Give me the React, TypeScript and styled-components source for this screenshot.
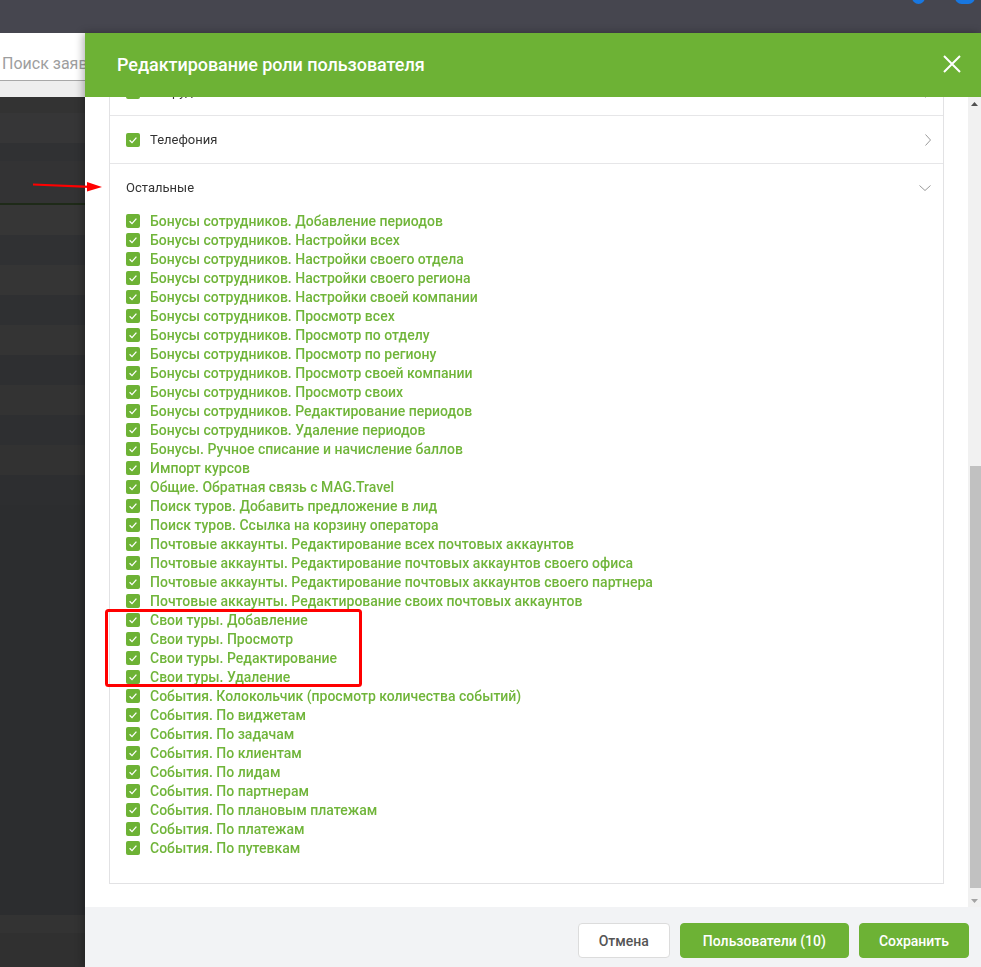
import React, { useLayoutEffect, useRef } from 'react'
import styled, { createGlobalStyle } from 'styled-components'

const GREEN = '#6db235'

const GlobalStyle = createGlobalStyle`
    html, body {
        margin: 0;
        padding: 0;
        height: 100%;
        overflow: hidden;
        background: #2c2d2f;
        font-family: Roboto, "Noto Sans", Arial, sans-serif;
    }
    #root {
        height: 100%;
    }
`

const Page = styled.div`
    height: 100vh;
    display: flex;
    flex-direction: column;
    position: relative;
`

const TopBar = styled.div`
    height: 33px;
    flex: none;
    background: #46464f;
    display: flex;
    justify-content: flex-end;
    align-items: flex-start;
    gap: 30px;
    padding-right: 6px;
`

const Badge = styled.span<{ $w: number }>`
    width: ${(p) => p.$w}px;
    height: 13px;
    margin-top: -9px;
    border-radius: 7px;
    background: #1877e0;
`

const Behind = styled.div`
    flex: 1;
    display: flex;
    flex-direction: column;
`

const SearchStrip = styled.div`
    height: 64px;
    flex: none;
    background: #fff;
    display: flex;
    flex-direction: column;
`

const SearchInput = styled.div`
    height: 48px;
    border-bottom: 1px solid #a8a8a8;
    display: flex;
    align-items: flex-end;
    padding: 0 0 7px 2px;
    box-sizing: border-box;
    font-size: 16px;
    line-height: 19px;
    color: #9e9e9e;
    white-space: nowrap;
    overflow: hidden;
`

const SearchUnder = styled.div`
    flex: 1;
    background: #eeeeee;
`

const Band = styled.div<{ $h: number; $c: string }>`
    height: ${(p) => p.$h}px;
    flex: none;
    background: ${(p) => p.$c};
`

const Drawer = styled.div`
    position: fixed;
    top: 33px;
    left: 85px;
    right: 0;
    bottom: 0;
    background: #fff;
    display: flex;
    flex-direction: column;
    box-shadow: -2px 0 8px rgba(0, 0, 0, 0.3);
`

const Header = styled.div`
    height: 64px;
    flex: none;
    background: ${GREEN};
    display: flex;
    align-items: center;
    justify-content: space-between;
    padding: 0 20px 2px 32px;
    box-sizing: border-box;
`

const Title = styled.h1`
    margin: 0;
    font-size: 18px;
    font-weight: 500;
    color: #fff;
    letter-spacing: -0.05px;
`

const BodyWrap = styled.div`
    flex: 1;
    min-height: 0;
    display: flex;
`

const Scroll = styled.div`
    flex: 1;
    overflow-y: auto;
    scrollbar-width: none;
    position: relative;
    padding: 24px 24px;
    &::-webkit-scrollbar {
        display: none;
    }
`

const ScrollTrack = styled.div`
    width: 13px;
    flex: none;
    background: #f1f1f1;
    display: flex;
    flex-direction: column;
    align-items: center;
`

const ScrollArrow = styled.div`
    height: 13px;
    flex: none;
    display: flex;
    align-items: center;
    justify-content: center;
`

const ScrollSpace = styled.div`
    flex: 1;
`

const Thumb = styled.div`
    width: 11px;
    margin-left: 2px;
    height: 422px;
    margin-bottom: 6px;
    background: #c1c1c1;
    flex: none;
`

const Panel = styled.div`
    border: 1px solid #e2e2e4;
`

const CategoryRow = styled.div<{ $open?: boolean }>`
    height: ${(p) => (p.$open ? '47px' : '48px')};
    box-sizing: border-box;
    display: flex;
    align-items: center;
    gap: 10px;
    padding: 0 11px 0 16px;
    border-bottom: ${(p) => (p.$open ? 'none' : '1px solid #e6e6e8')};
    font-size: 13px;
    color: #333;
`

const CategoryName = styled.span`
    flex: 1;
`

const ItemList = styled.div`
    padding: 0 16px 26px;
    display: flex;
    flex-direction: column;
`

const Item = styled.div`
    height: 19px;
    display: flex;
    align-items: center;
    gap: 10px;
    font-size: 14px;
    font-weight: 500;
    color: #70b53a;
    white-space: nowrap;
`

const Footer = styled.div`
    height: 60px;
    flex: none;
    background: #f2f3f5;
    display: flex;
    justify-content: flex-end;
    align-items: flex-start;
    gap: 10px;
    padding: 16px 12px 0 0;
    box-sizing: border-box;
`

const Button = styled.button<{ $primary?: boolean; $pad: number }>`
    height: 35px;
    padding: 0 ${(p) => p.$pad}px;
    border-radius: 4px;
    font-family: inherit;
    font-size: 14px;
    font-weight: 500;
    cursor: pointer;
    border: 1px solid ${(p) => (p.$primary ? GREEN : '#dcdcdc')};
    background: ${(p) => (p.$primary ? GREEN : '#fff')};
    color: ${(p) => (p.$primary ? '#fff' : '#555')};
`

const Notes = styled.svg`
    position: absolute;
    inset: 0;
    width: 100%;
    height: 100%;
    pointer-events: none;
`

const Check = () => (
    <svg width="14" height="14" viewBox="0 0 14 14" style={{ flex: 'none' }}>
        <rect width="14" height="14" rx="2" fill={GREEN} />
        <path d="M3.6 7.3 L6 9.6 L10.4 4.6" fill="none" stroke="#fff" strokeWidth="1.3" />
    </svg>
)

const ChevronRight = () => (
    <svg width="8" height="14" viewBox="0 0 8 14">
        <path d="M1.5 1.5 L6.5 7 L1.5 12.5" fill="none" stroke="#999" strokeWidth="1" />
    </svg>
)

const ChevronDown = () => (
    <svg width="14" height="8" viewBox="0 0 14 8">
        <path d="M1.5 1.5 L7 6.5 L12.5 1.5" fill="none" stroke="#999" strokeWidth="1" />
    </svg>
)

const CloseIcon = () => (
    <svg width="18" height="18" viewBox="0 0 18 18">
        <path d="M1 1 L17 17 M17 1 L1 17" stroke="#fff" strokeWidth="2" />
    </svg>
)

const bands: [number, string][] = [
    [16, '#333333'],
    [30, '#363637'],
    [18, '#303133'],
    [42, '#333334'],
    [2, '#1e2a18'],
    [30, '#363636'],
    [30, '#303133'],
    [30, '#353535'],
    [30, '#2f3032'],
    [30, '#343434'],
    [30, '#2e2f31'],
    [30, '#333333'],
    [30, '#2e2f31'],
    [30, '#323232'],
    [30, '#2d2e30'],
    [410, '#2c2d2f'],
    [18, '#333333'],
    [40, '#303030'],
]

const before = ['Заявки', 'Клиенты', 'Сотрудники']

const items = [
    'Бонусы сотрудников. Добавление периодов',
    'Бонусы сотрудников. Настройки всех',
    'Бонусы сотрудников. Настройки своего отдела',
    'Бонусы сотрудников. Настройки своего региона',
    'Бонусы сотрудников. Настройки своей компании',
    'Бонусы сотрудников. Просмотр всех',
    'Бонусы сотрудников. Просмотр по отделу',
    'Бонусы сотрудников. Просмотр по региону',
    'Бонусы сотрудников. Просмотр своей компании',
    'Бонусы сотрудников. Просмотр своих',
    'Бонусы сотрудников. Редактирование периодов',
    'Бонусы сотрудников. Удаление периодов',
    'Бонусы. Ручное списание и начисление баллов',
    'Импорт курсов',
    'Общие. Обратная связь с MAG.Travel',
    'Поиск туров. Добавить предложение в лид',
    'Поиск туров. Ссылка на корзину оператора',
    'Почтовые аккаунты. Редактирование всех почтовых аккаунтов',
    'Почтовые аккаунты. Редактирование почтовых аккаунтов своего офиса',
    'Почтовые аккаунты. Редактирование почтовых аккаунтов своего партнера',
    'Почтовые аккаунты. Редактирование своих почтовых аккаунтов',
    'Свои туры. Добавление',
    'Свои туры. Просмотр',
    'Свои туры. Редактирование',
    'Свои туры. Удаление',
    'События. Колокольчик (просмотр количества событий)',
    'События. По виджетам',
    'События. По задачам',
    'События. По клиентам',
    'События. По лидам',
    'События. По партнерам',
    'События. По плановым платежам',
    'События. По платежам',
    'События. По путевкам',
]

const App = () => {
    const scrollRef = useRef<HTMLDivElement>(null)
    const telRef = useRef<HTMLDivElement>(null)

    // list is scrolled so that "Телефония" sits just below the header
    useLayoutEffect(() => {
        if (scrollRef.current && telRef.current) {
            scrollRef.current.scrollTop = telRef.current.offsetTop - 19
        }
    }, [])

    return (
        <Page>
            <GlobalStyle />
            <TopBar>
                <Badge $w={13} />
                <Badge $w={20} />
            </TopBar>
            <Behind>
                <SearchStrip>
                    <SearchInput>Поиск заявок</SearchInput>
                    <SearchUnder />
                </SearchStrip>
                {bands.map(([h, c], i) => (
                    <Band key={i} $h={h} $c={c} />
                ))}
            </Behind>

            <Drawer>
                <Header>
                    <Title>Редактирование роли пользователя</Title>
                    <CloseIcon />
                </Header>
                <BodyWrap>
                    <Scroll ref={scrollRef}>
                        <Panel>
                            {before.map((name) => (
                                <CategoryRow key={name}>
                                    <Check />
                                    <CategoryName>{name}</CategoryName>
                                    <ChevronRight />
                                </CategoryRow>
                            ))}
                            <CategoryRow ref={telRef}>
                                <Check />
                                <CategoryName>Телефония</CategoryName>
                                <ChevronRight />
                            </CategoryRow>
                            <CategoryRow $open>
                                <CategoryName>Остальные</CategoryName>
                                <ChevronDown />
                            </CategoryRow>
                            <ItemList>
                                {items.map((t) => (
                                    <Item key={t}>
                                        <Check />
                                        {t}
                                    </Item>
                                ))}
                            </ItemList>
                        </Panel>
                    </Scroll>
                    <ScrollTrack>
                        <ScrollArrow>
                            <svg width="7" height="4" viewBox="0 0 7 4">
                                <path d="M0 4 L3.5 0 L7 4 Z" fill="#505050" />
                            </svg>
                        </ScrollArrow>
                        <ScrollSpace />
                        <Thumb />
                        <ScrollArrow>
                            <svg width="7" height="4" viewBox="0 0 7 4">
                                <path d="M0 0 L3.5 4 L7 0 Z" fill="#a3a3a3" />
                            </svg>
                        </ScrollArrow>
                    </ScrollTrack>
                </BodyWrap>
                <Footer>
                    <Button $pad={20}>Отмена</Button>
                    <Button $primary $pad={22}>
                        Пользователи (10)
                    </Button>
                    <Button $primary $pad={19}>
                        Сохранить
                    </Button>
                </Footer>
            </Drawer>

            <Notes>
                <path d="M33 184.5 L90 186.8" stroke="#f00" strokeWidth="2.2" />
                <path d="M87 182 L102 187 L87 191.5 Z" fill="#f00" />
                <rect x="106.5" y="610.5" width="254" height="75" rx="2" fill="none" stroke="#f00" strokeWidth="3" />
            </Notes>
        </Page>
    )
}

export default App
